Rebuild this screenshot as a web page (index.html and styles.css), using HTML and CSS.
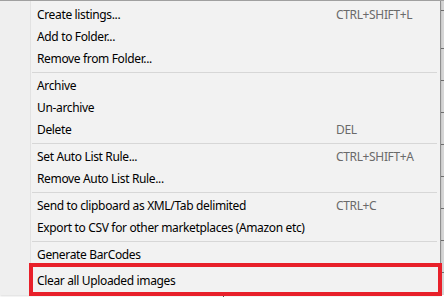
FILE: index.html
```html
<!DOCTYPE html>
<html lang="en">
  <head>
    <meta charset="UTF-8" />
    <title>Listing context menu</title>
    <link rel="stylesheet" href="styles.css">
  </head>
  <body>
    <div class="screen">
      <div class="menu-row">
        <div class="menu">
          <div class="gutter"></div>
          <div class="items">
            <div class="item"><span>Create listings...</span><span class="key">CTRL+SHIFT+L</span></div>
            <div class="item"><span>Add to Folder...</span></div>
            <div class="item"><span>Remove from Folder...</span></div>
            <div class="sep"></div>
            <div class="item"><span>Archive</span></div>
            <div class="item"><span>Un-archive</span></div>
            <div class="item"><span>Delete</span><span class="key">DEL</span></div>
            <div class="sep"></div>
            <div class="item"><span>Set Auto List Rule...</span><span class="key">CTRL+SHIFT+A</span></div>
            <div class="item"><span>Remove Auto List Rule...</span></div>
            <div class="sep"></div>
            <div class="item"><span>Send to clipboard as XML/Tab delimited</span><span class="key">CTRL+C</span></div>
            <div class="item"><span>Export to CSV for other marketplaces (Amazon etc)</span></div>
            <div class="sep"></div>
            <div class="item"><span>Generate BarCodes</span></div>
            <div class="item last"><span>Clear all Uploaded images</span></div>
          </div>
          <div class="highlight"></div>
        </div>
        <div class="grid-edge"></div>
      </div>
      <div class="grid-below"></div>
    </div>
  </body>
</html>
```

FILE: styles.css
```css
body {
  margin: 0;
  font-family: "Noto Sans", "Open Sans", sans-serif;
  font-size: 12px;
  letter-spacing: -0.35px;
  color: #000;
  background-color: #fff;
}
.screen {
  width: 444px;
  height: 297px;
  overflow: hidden;
  border-top: 1px solid #a0a0a0;
  box-sizing: border-box;
}
.menu-row {
  display: flex;
  height: 294px;
}
.menu {
  position: relative;
  display: flex;
  width: 440px;
  background-color: #f2f2f2;
  border-right: 1px solid #8f8f8f;
  box-shadow: 0 1px 2px rgba(0, 0, 0, 0.15);
}
.gutter {
  width: 30px;
  background-color: #efefef;
  border-right: 1px solid #e2e2e2;
  flex-shrink: 0;
}
.items {
  flex-grow: 1;
  padding-top: 3px;
}
.item {
  display: grid;
  grid-template-columns: 299px auto;
  height: 22px;
  line-height: 22px;
  padding-left: 6px;
  white-space: nowrap;
}
.item.last {
  margin-top: 4px;
}
.key {
  color: #6a6a6a;
}
.sep {
  height: 1px;
  margin: 2px 3px 2px 1px;
  background-color: #d7d7d7;
}
.highlight {
  position: absolute;
  left: 29px;
  top: 262px;
  width: 405px;
  height: 25px;
  border: 4px solid #e8202a;
}
.grid-edge {
  width: 3px;
  background-color: #d6d6d6;
  background-image: repeating-linear-gradient(
    to bottom,
    transparent 0,
    transparent 31px,
    #707070 31px,
    #707070 32px
  );
  background-position: 0 16px;
}
.grid-below {
  height: 2px;
  margin-left: 223px;
  width: 1px;
  background-color: #555;
}
```
